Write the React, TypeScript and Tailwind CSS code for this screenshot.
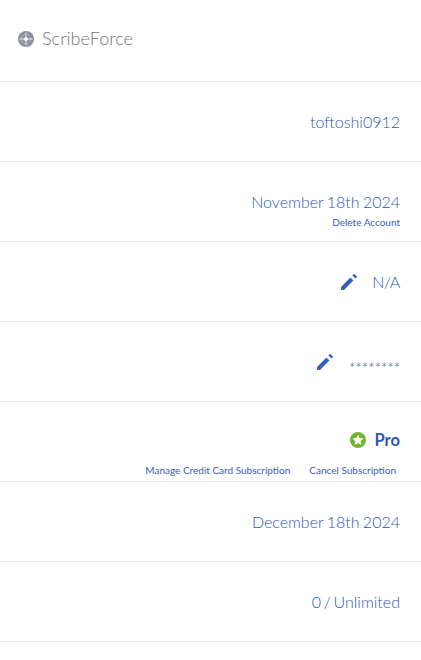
import React from 'react';

// Pencil with the detached tip, used next to the editable rows
const PencilIcon = () => (
  <svg width="16" height="16" viewBox="0 0 16 16" fill="#3560b8" className="block">
    <path d="M0 16v-3L9.4 3.6l3 3L3 16z" />
    <path d="M11.4 1.4L12.4.4a1 1 0 0 1 1.4 0l1.8 1.8a1 1 0 0 1 0 1.4l-1 1z" />
  </svg>
);

const LogoIcon = () => (
  <svg width="16" height="16" viewBox="0 0 16 16" className="block">
    <circle cx="8" cy="8" r="8" fill="#8b8f9c" />
    <path d="M8 1.5v13M1.5 8h13" stroke="#ffffff" strokeWidth="1" opacity="0.8" />
    <path d="M8 5.4L10.6 8 8 10.6 5.4 8z" fill="#ffffff" />
    <circle cx="8" cy="8" r="4.8" fill="none" stroke="#ffffff" strokeWidth="0.8" opacity="0.35" />
  </svg>
);

const StarBadge = () => (
  <svg width="16" height="16" viewBox="0 0 16 16" className="block">
    <circle cx="8" cy="8" r="8" fill="#74b32f" />
    <path d="M8 2.6l1.65 3.45 3.8.5-2.8 2.6.72 3.75L8 11.05l-3.37 1.85.72-3.75-2.8-2.6 3.8-.5z" fill="#ffffff" />
  </svg>
);

const Row: React.FC<{ children: React.ReactNode }> = ({ children }) => (
  <div className="h-20 border-b border-[#e8e8e8] px-[21px] flex flex-col items-end justify-center">
    {children}
  </div>
);

export default function App() {
  return (
    <div className="w-[421px] h-[660px] overflow-hidden bg-white text-[#2d58b8] font-['Lato',sans-serif]">
      <div className="h-[82px] border-b border-[#e2e2e2] pl-[18px] flex items-center gap-2 pb-[4px]">
        <LogoIcon />
        <span className="text-[18px] font-light tracking-[0.05px] text-[#6f7486]">ScribeForce</span>
      </div>

      <Row>
        <span className="text-[16px] font-light leading-5">toftoshi0912</span>
      </Row>

      <Row>
        <span className="text-[16px] font-light leading-5 mt-[16px] [word-spacing:-1px]">November 18th 2024</span>
        <span className="text-[10px] leading-3 mt-[4px] text-[#3560c0]">Delete Account</span>
      </Row>

      <Row>
        <div className="flex items-center">
          <PencilIcon />
          <span className="ml-[15px] text-[16px] font-light leading-5 tracking-[-0.3px]">N/A</span>
        </div>
      </Row>

      <Row>
        <div className="flex items-center">
          <PencilIcon />
          <span className="ml-[16px] text-[16px] font-light leading-5 mt-[12px] tracking-[-0.4px]">********</span>
        </div>
      </Row>

      <div className="h-20 border-b border-[#e8e8e8] pr-[21px] flex flex-col items-end justify-end">
        <div className="flex items-center gap-[9px]">
          <StarBadge />
          <span className="text-[16.5px] font-bold leading-5">Pro</span>
        </div>
        <div className="flex gap-[19px] mt-[14px] mb-[5px] mr-[4px] text-[10px] leading-3 text-[#3560c0]">
          <span>Manage Credit Card Subscription</span>
          <span>Cancel Subscription</span>
        </div>
      </div>

      <Row>
        <span className="text-[16px] font-light leading-5 [word-spacing:-1px]">December 18th 2024</span>
      </Row>

      <Row>
        <span className="text-[16px] font-light leading-5 [word-spacing:-1.5px]">0 / Unlimited</span>
      </Row>
    </div>
  );
}
